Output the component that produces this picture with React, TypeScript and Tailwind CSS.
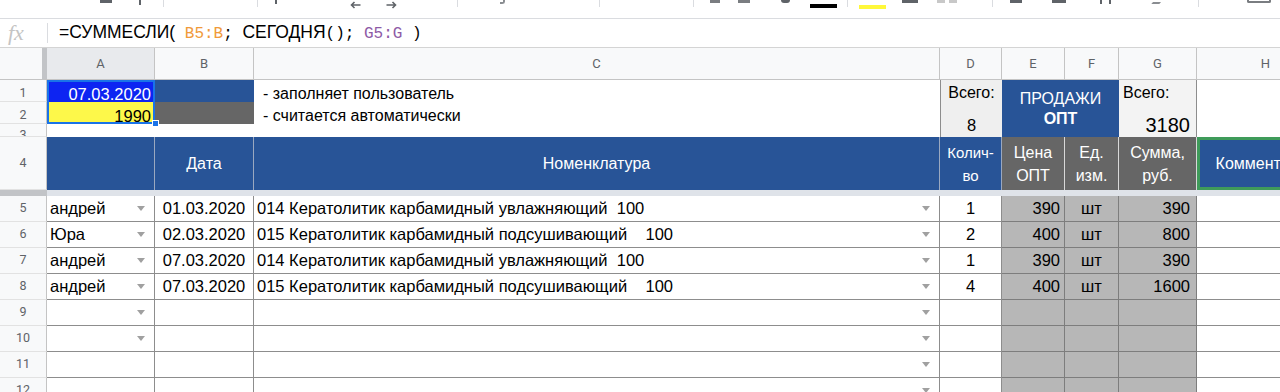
const COLS = 'grid grid-cols-[47px_108px_99px_686px_62px_63px_54px_78px_138px]';

function Arrow() {
  return (
    <span className="inline-block w-0 h-0 border-x-[4px] border-x-transparent border-t-[5px] border-t-[#a0a0a0]" />
  );
}

function Toolbar() {
  return (
    <div className="h-[19px] border-b border-[#dadce0] flex items-start">
      <div className="ml-[100px] w-[12px] h-[3px] bg-[#5f6368]" />
      <div className="ml-[27px] w-[2px] h-[5px] bg-[#5f6368]" />
      <div className="ml-[22px] w-px h-[7px] bg-[#dadce0]" />
      <div className="ml-[93px] w-px h-[7px] bg-[#dadce0]" />
      <div className="ml-[17px] w-[2px] h-[4px] bg-[#5f6368]" />
      <svg className="ml-[73px] mt-[1px]" width="11" height="8" viewBox="0 0 11 8">
        <path d="M10.5 4H1.5M4.5 1L1.5 4L4.5 7" stroke="#5f6368" strokeWidth="1.6" fill="none" />
      </svg>
      <svg className="ml-[25px] mt-[1px]" width="11" height="8" viewBox="0 0 11 8">
        <path d="M0.5 4H9.5M6.5 1L9.5 4L6.5 7" stroke="#5f6368" strokeWidth="1.6" fill="none" />
      </svg>
      <div className="ml-[60px] w-px h-[7px] bg-[#dadce0]" />
      <div className="ml-[42px] w-[5px] h-[4px] border-b-2 border-r-2 border-[#8a8d91] rounded-br-[3px]" />
      <div className="ml-[94px] w-px h-[7px] bg-[#dadce0]" />
      <div className="ml-[93px] w-px h-[7px] bg-[#dadce0]" />
      <div className="ml-[16px] w-[10px] h-[3px] bg-[#7a7d81]" />
      <div className="ml-[18px] w-[12px] h-[3px] bg-[#7a7d81]" />
      <div className="ml-[31px] w-[9px] h-[3px] rounded-b-full bg-[#5f6368]" />
      <div className="ml-[20px] mt-[4px] w-[27px] h-[4px] bg-black" />
      <div className="ml-[10px] w-px h-[7px] bg-[#dadce0]" />
      <div className="ml-[11px] mt-[5px] w-[27px] h-[4px] bg-[#fff83a]" />
      <div className="ml-[16px] w-[16px] h-[3px] bg-[#5f6368]" />
      <div className="ml-[19px] w-[8px] h-[3px] bg-[#c8c8c8]" />
      <div className="ml-[4px] w-[8px] h-[3px] bg-[#c8c8c8]" />
      <div className="ml-[35px] w-px h-[7px] bg-[#dadce0]" />
      <div className="ml-[17px] w-[12px] h-[3px] bg-[#5f6368]" />
      <div className="ml-[30px] w-[14px] h-[3px] bg-[#5f6368]" />
      <div className="ml-[34px] w-[2px] h-[4px] bg-[#5f6368]" />
      <div className="ml-[7px] w-[2px] h-[4px] bg-[#5f6368]" />
      <div className="ml-[42px] w-[8px] h-[4px] border-b-2 border-[#8a8d91] -skew-x-[40deg]" />
      <div className="ml-[37px] w-px h-[7px] bg-[#dadce0]" />
      <div className="ml-[48px] w-[24px] h-[3px] border-b-2 border-x-2 border-[#7a7d81] rounded-b-[2px]" />
    </div>
  );
}

function FormulaBar() {
  const mono = "font-['Liberation_Mono',monospace] text-[16px]";
  return (
    <div className="h-[29px] border-b border-[#d4d4d4] flex items-center">
      <div className="w-[47px] pl-[8px] font-['Liberation_Serif',serif] italic text-[22px] text-[#c4c4c4] leading-none">
        fx
      </div>
      <div className="w-px h-[20px] bg-[#dadce0]" />
      <div className="ml-[11px] text-[17.5px] text-black whitespace-pre leading-none">
        =СУММЕСЛИ(<span className={mono}> </span>
        <span className={`${mono} text-[#f09a3a]`}>B5:B</span>
        <span className={mono}>; </span>СЕГОДНЯ
        <span className={mono}>(); </span>
        <span className={`${mono} text-[#8e5aa6]`}>G5:G</span>
        <span className={mono}> )</span>
      </div>
    </div>
  );
}

function ColumnHeader() {
  const letters = ['B', 'C', 'D', 'E', 'F', 'G', 'H'];
  return (
    <div className={`${COLS} h-[32px] border-b border-[#c4c4c4] bg-[#f8f9fa] font-['Roboto',sans-serif] text-[13px] text-[#5f6368]`}>
      <div className="flex">
        <div className="w-[42px]" />
        <div className="w-[5px] bg-[#c2c4c7]" />
      </div>
      <div className="flex items-center justify-center bg-[#e8eaed] border-r border-[#c4c4c4]">A</div>
      {letters.map((l) => (
        <div key={l} className="flex items-center justify-center border-r border-[#c4c4c4]">
          {l}
        </div>
      ))}
    </div>
  );
}

const rowHead = "flex items-center justify-center bg-[#f8f9fa] border-r border-[#c4c4c4] border-b border-b-[#e2e2e2] font-['Roboto',sans-serif] text-[12.5px] text-[#5f6368]";

function TopBlock() {
  return (
    <div className={`${COLS} grid-rows-[22px_22px_13px] text-[16px] text-black`}>
      <div className={`${rowHead} col-start-1 row-start-1 bg-[#e8eaed] pt-[5px]`}>1</div>
      <div className={`${rowHead} col-start-1 row-start-2 bg-[#e8eaed] pt-[5px]`}>2</div>
      <div className={`${rowHead} col-start-1 row-start-3 items-start overflow-hidden pt-[5px] leading-none`}>3</div>

      <div className="col-start-2 row-start-1 row-span-2 relative flex flex-col">
        <div className="h-[22px] bg-[#0d24f2] text-white flex items-end justify-end pr-[4px] leading-[16px] text-[16.5px]">07.03.2020</div>
        <div className="h-[22px] bg-[#fdf84a] flex items-end justify-end pr-[4px] leading-[16px] text-[16.5px]">1990</div>
        <div className="absolute inset-0 border-2 border-[#1a73e8] pointer-events-none" />
        <div className="absolute right-[-4px] bottom-[-3px] w-[7px] h-[7px] bg-[#1a73e8] border border-white" />
      </div>
      <div className="col-start-2 row-start-3" />

      <div className="col-start-3 row-start-1 bg-[#285497]" />
      <div className="col-start-3 row-start-2 bg-[#666666]" />
      <div className="col-start-3 row-start-3" />

      <div className="col-start-4 row-start-1 flex items-end leading-[16px] pl-[9px] whitespace-pre">- заполняет пользователь</div>
      <div className="col-start-4 row-start-2 flex items-end leading-[16px] pl-[9px] whitespace-pre">- считается автоматически</div>
      <div className="col-start-4 row-start-3" />

      <div className="col-start-5 row-start-1 row-span-3 bg-[#efefef] border-l border-[#8d8d8d] flex flex-col items-center justify-between pt-[3px] pb-[2px] leading-[20px]">
        <span>Всего:</span>
        <span className="text-[16.5px]">8</span>
      </div>

      <div className="col-start-6 col-span-2 row-start-1 row-span-3 bg-[#285497] text-white flex flex-col items-center justify-center leading-[20px]">
        <span>ПРОДАЖИ</span>
        <span className="font-bold">ОПТ</span>
      </div>

      <div className="col-start-8 row-start-1 row-span-3 bg-[#f3f3f3] border-r border-[#8d8d8d] flex flex-col justify-between pt-[3px] pb-[1px]">
        <span className="pl-[4px] leading-[20px]">Всего:</span>
        <span className="self-end pr-[6px] text-[20px] leading-[22px]">3180</span>
      </div>

      <div className="col-start-9 row-start-1 row-span-3" />
    </div>
  );
}

function HeaderRow() {
  const blue = 'bg-[#285497] border-r border-[#9aa8c0] text-white flex items-center justify-center text-center';
  const gray = 'bg-[#666666] border-r border-[#d8d8d8] text-white flex items-center justify-center text-center leading-[23px]';
  return (
    <div className={`${COLS} h-[53px] text-[16px]`}>
      <div className={rowHead}>4</div>
      <div className={blue} />
      <div className={blue}>Дата</div>
      <div className={blue}>Номенклатура</div>
      <div className={`${blue} text-[15px] leading-[23px]`}>
        Колич-
        <br />
        во
      </div>
      <div className={gray}>
        Цена
        <br />
        ОПТ
      </div>
      <div className={gray}>
        Ед.
        <br />
        изм.
      </div>
      <div className={gray}>
        Сумма,
        <br />
        руб.
      </div>
      <div className="bg-[#285497] border-[3px] border-[#3f9b5a] text-white flex items-center justify-center whitespace-nowrap overflow-hidden">
        Комментарий
      </div>
    </div>
  );
}

type Row = {
  n: number;
  who?: string;
  date?: string;
  name?: string;
  qty?: string;
  price?: string;
  unit?: string;
  sum?: string;
  arrowA?: boolean;
};

const rows: Row[] = [
  { n: 5, who: 'андрей', date: '01.03.2020', name: '014 Кератолитик карбамидный увлажняющий  100', qty: '1', price: '390', unit: 'шт', sum: '390', arrowA: true },
  { n: 6, who: 'Юра', date: '02.03.2020', name: '015 Кератолитик карбамидный подсушивающий    100', qty: '2', price: '400', unit: 'шт', sum: '800', arrowA: true },
  { n: 7, who: 'андрей', date: '07.03.2020', name: '014 Кератолитик карбамидный увлажняющий  100', qty: '1', price: '390', unit: 'шт', sum: '390', arrowA: true },
  { n: 8, who: 'андрей', date: '07.03.2020', name: '015 Кератолитик карбамидный подсушивающий    100', qty: '4', price: '400', unit: 'шт', sum: '1600', arrowA: true },
  { n: 9, arrowA: true },
  { n: 10, arrowA: true },
  { n: 11 },
  { n: 12 },
];

function DataRow({ r }: { r: Row }) {
  const cell = 'border-r border-b border-[#8d8d8d] flex items-center';
  const grey = 'bg-[#b7b7b7] border-r border-b border-[#7d7d7d] flex items-center';
  return (
    <div className={`${COLS} h-[26px] text-[16.5px] text-black`}>
      <div className={rowHead}>{r.n}</div>
      <div className={`${cell} justify-between pl-[3px] pr-[9px]`}>
        <span>{r.who}</span>
        {r.arrowA && <Arrow />}
      </div>
      <div className={`${cell} justify-center`}>{r.date}</div>
      <div className={`${cell} justify-between pl-[3px] pr-[9px]`}>
        <span className="whitespace-pre">{r.name}</span>
        <Arrow />
      </div>
      <div className={`${cell} justify-center`}>{r.qty}</div>
      <div className={`${grey} justify-end pr-[4px]`}>{r.price}</div>
      <div className={`${grey} justify-center`}>{r.unit}</div>
      <div className={`${grey} justify-end pr-[6px]`}>{r.sum}</div>
      <div className="border-b border-[#8d8d8d]" />
    </div>
  );
}

export default function App() {
  return (
    <div className="w-[1280px] h-[392px] overflow-hidden bg-white font-['Liberation_Sans',Arial,sans-serif]">
      <Toolbar />
      <FormulaBar />
      <ColumnHeader />
      <TopBlock />
      <HeaderRow />
      <div className="h-[6px] flex">
        <div className="w-[47px] bg-[#c2c4c7]" />
        <div className="flex-1 bg-[#dfe3e9]" />
      </div>
      {rows.map((r) => (
        <DataRow key={r.n} r={r} />
      ))}
    </div>
  );
}
